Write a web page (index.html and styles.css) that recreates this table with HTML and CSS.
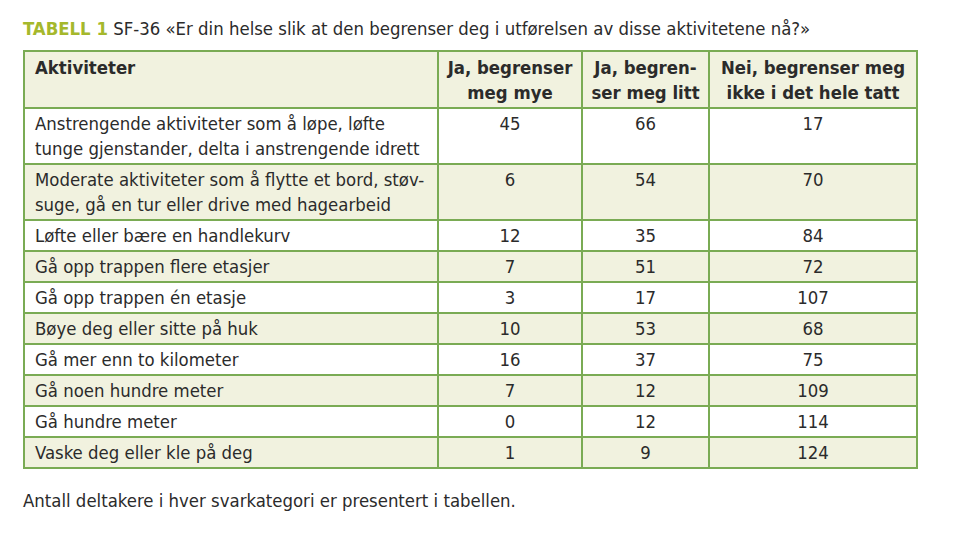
FILE: index.html
```html
<!DOCTYPE html>
<html lang="no">
<head>
<meta charset="utf-8">
<link rel="stylesheet" href="styles.css">
</head>
<body>
<div class="page">
  <h1 class="title"><span class="label">TABELL 1</span> SF-36 «Er din helse slik at den begrenser deg i utførelsen av disse aktivitetene nå?»</h1>
  <table class="tbl">
    <colgroup>
      <col class="c1"><col class="c2"><col class="c3"><col class="c4">
    </colgroup>
    <thead>
      <tr class="tint">
        <th class="act">Aktiviteter</th>
        <th>Ja, begrenser<br>meg mye</th>
        <th>Ja, begren-<br>ser meg litt</th>
        <th>Nei, begrenser meg<br>ikke i det hele tatt</th>
      </tr>
    </thead>
    <tbody>
      <tr><td class="act">Anstrengende aktiviteter som å løpe, løfte<br>tunge gjenstander, delta i anstrengende idrett</td><td>45</td><td>66</td><td>17</td></tr>
      <tr class="tint"><td class="act">Moderate aktiviteter som å flytte et bord, støv-<br>suge, gå en tur eller drive med hagearbeid</td><td>6</td><td>54</td><td>70</td></tr>
      <tr><td class="act">Løfte eller bære en handlekurv</td><td>12</td><td>35</td><td>84</td></tr>
      <tr class="tint"><td class="act">Gå opp trappen flere etasjer</td><td>7</td><td>51</td><td>72</td></tr>
      <tr><td class="act">Gå opp trappen én etasje</td><td>3</td><td>17</td><td>107</td></tr>
      <tr class="tint"><td class="act">Bøye deg eller sitte på huk</td><td>10</td><td>53</td><td>68</td></tr>
      <tr><td class="act">Gå mer enn to kilometer</td><td>16</td><td>37</td><td>75</td></tr>
      <tr class="tint"><td class="act">Gå noen hundre meter</td><td>7</td><td>12</td><td>109</td></tr>
      <tr><td class="act">Gå hundre meter</td><td>0</td><td>12</td><td>114</td></tr>
      <tr class="tint"><td class="act">Vaske deg eller kle på deg</td><td>1</td><td>9</td><td>124</td></tr>
    </tbody>
  </table>
  <p class="note">Antall deltakere i hver svarkategori er presentert i tabellen.</p>
</div>
</body>
</html>
```
FILE: styles.css
```css
html, body {
  margin: 0;
  padding: 0;
  background: #ffffff;
}
.page {
  padding: 17px 0 0 23px;
  font-family: "DejaVu Sans Condensed", "DejaVu Sans", sans-serif;
  font-stretch: condensed;
  color: #2b2b2b;
}
.title {
  margin: 0 0 9px 0;
  font-size: 18.4px;
  line-height: 24px;
  font-weight: normal;
  white-space: nowrap;
}
.label {
  color: #a5b82c;
  font-weight: bold;
}
.tbl {
  border-collapse: collapse;
  table-layout: fixed;
  width: 893px;
  font-size: 18.4px;
  line-height: 25px;
}
.c1 { width: 414px; }
.c2 { width: 144px; }
.c3 { width: 127px; }
.c4 { width: 208px; }
.tbl th, .tbl td {
  border: 2px solid #7aab54;
  padding: 2px 4px 2px;
  text-align: center;
  vertical-align: top;
}
.tbl th {
  font-weight: bold;
  padding: 3px 4px 2px;
}
.tbl .act {
  text-align: left;
  padding-left: 10px;
}
.tint {
  background: #f1f2df;
}
.note {
  margin: 20px 0 0 0;
  font-size: 18.4px;
  line-height: 24px;
}
```
